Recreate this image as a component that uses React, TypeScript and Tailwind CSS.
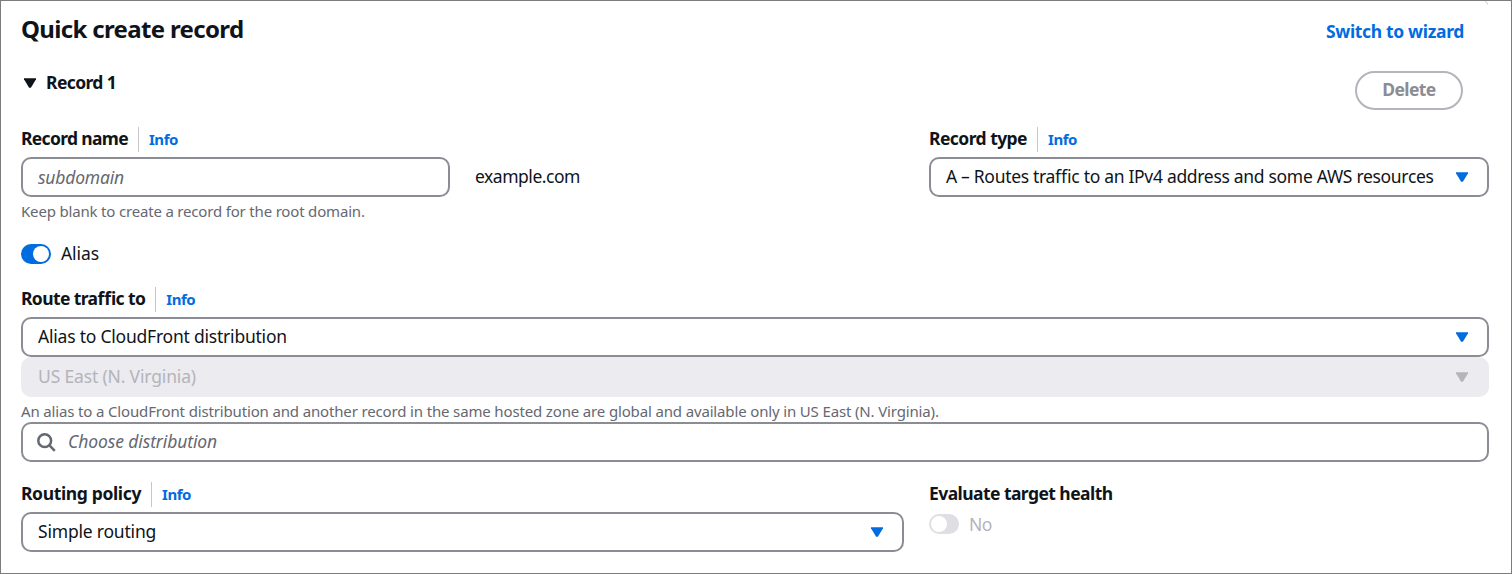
import type { ReactNode } from "react";

function Caret({ className = "" }: { className?: string }) {
  return (
    <svg className={`shrink-0 ${className}`} width="14" height="12" viewBox="0 0 14 12" fill="currentColor">
      <path d="M1 1.2h12v1L7.9 10.7H6.1L1 2.2z" />
    </svg>
  );
}

function Label({ text, spacing, info = true }: { text: string; spacing: string; info?: boolean }) {
  return (
    <div className="flex h-[25px] items-center">
      <span className={`pb-[2px] text-[17.5px] leading-[23px] font-bold whitespace-nowrap text-[#0f141a] ${spacing}`}>{text}</span>
      {info && (
        <span className="ml-[10px] flex h-[25px] items-center border-l border-[#c6c6cd] pl-[10px] text-[15px] font-bold tracking-[-0.45px] text-[#006ce0]">
          Info
        </span>
      )}
    </div>
  );
}

function Field({ children, className = "" }: { children: ReactNode; className?: string }) {
  return (
    <div
      className={`flex h-10 items-center rounded-[10px] border-2 border-[#8c8c94] bg-white px-[15px] text-[17.5px] leading-6 whitespace-nowrap text-[#0f141a] ${className}`}
    >
      {children}
    </div>
  );
}

export default function App() {
  return (
    <main className="relative h-[574px] w-[1512px] overflow-hidden border border-[#7c7c7c] bg-white pr-[22px] pl-5 font-['Noto_Sans',sans-serif] text-[#0f141a] [font-feature-settings:'liga'_1,'kern'_1]">
      <svg className="absolute top-0 right-[22px]" width="5" height="4" viewBox="0 0 5 4" fill="none" stroke="#c9c9ce">
        <path d="M1 0Q3 .8 3.5 3.5" />
      </svg>

      <header className="flex h-[58px] items-center justify-between pr-[25px]">
        <h1 className="-mt-[2px] text-[24px] leading-8 font-bold tracking-[-0.66px]">Quick create record</h1>
        <a className="mt-[2px] text-[17.5px] leading-6 font-bold tracking-[-0.33px] text-[#006ce0]">Switch to wizard</a>
      </header>

      <div className="flex h-[68px] items-start justify-between pt-[12px] pr-[26px]">
        <div className="flex h-6 items-center gap-[9px] pl-[2px]">
          <Caret />
          <span className="-mt-[2px] text-[17.5px] leading-6 font-bold tracking-[-0.6px]">Record 1</span>
        </div>
        <button className="flex h-[39px] w-[108px] items-center justify-center rounded-full border-2 border-[#b4b4bb] pb-[2px] text-[17.5px] font-bold tracking-[-0.58px] text-[#8c8c94]">
          Delete
        </button>
      </div>

      <section className="flex h-[117px] justify-between">
        <div>
          <Label text="Record name" spacing="tracking-[-0.67px]" />
          <div className="mt-[5px] flex items-center gap-[25px]">
            <Field className="w-[429px]">
              <span className="-mt-px tracking-[-0.19px] text-[#656871] italic">subdomain</span>
            </Field>
            <span className="-mt-[2px] text-[17.5px] leading-6 tracking-[-0.47px]">example.com</span>
          </div>
          <p className="mt-[4px] text-[15px] leading-5 tracking-[-0.18px] text-[#656871]">
            Keep blank to create a record for the root domain.
          </p>
        </div>
        <div className="w-[560px]">
          <Label text="Record type" spacing="tracking-[-0.55px]" />
          <Field className="mt-[5px] justify-between pr-[18px]">
            <span className="-mt-[2px] tracking-[-0.31px]">A – Routes traffic to an IPv4 address and some AWS resources</span>
            <Caret className="text-[#006ce0]" />
          </Field>
        </div>
      </section>

      <div className="flex h-[43px] items-start">
        <div className="flex h-5 items-center gap-[10px]">
          <span className="flex h-5 w-[30px] items-center justify-end rounded-full bg-[#006ce0] pr-[2px]">
            <span className="size-4 rounded-full bg-white" />
          </span>
          <span className="-mt-[2px] text-[17.5px] leading-5 tracking-[-0.08px]">Alias</span>
        </div>
      </div>

      <section className="flex h-[195px] flex-col">
        <Label text="Route traffic to" spacing="tracking-[-0.61px]" />
        <Field className="mt-[5px] justify-between pr-[18px]">
          <span className="-mt-[2px] tracking-[-0.22px]">Alias to CloudFront distribution</span>
          <Caret className="text-[#006ce0]" />
        </Field>
        <div className="flex h-10 items-center justify-between rounded-[10px] bg-[#ebebf0] pr-5 pl-[17px] text-[17.5px] leading-6 text-[#b4b4bb]">
          <span className="-mt-[2px] tracking-[-0.16px]">US East (N. Virginia)</span>
          <Caret />
        </div>
        <p className="mt-[4px] mb-px text-[15px] leading-5 tracking-[-0.15px] whitespace-nowrap text-[#656871]">
          An alias to a CloudFront distribution and another record in the same hosted zone are global and available only in
          US East (N. Virginia).
        </p>
        <Field className="pl-[14px]">
          <svg className="mr-[12px] shrink-0" width="19" height="19" viewBox="0 0 19 19" fill="none" stroke="#656871" strokeWidth="2.5">
            <circle cx="7.7" cy="7.7" r="6.4" />
            <path d="m12.2 12.2 5.6 5.6" />
          </svg>
          <span className="-mt-[2px] tracking-[-0.1px] text-[#656871] italic">Choose distribution</span>
        </Field>
      </section>

      <section className="flex">
        <div className="w-[883px]">
          <Label text="Routing policy" spacing="tracking-[-0.36px]" />
          <Field className="mt-[5px] justify-between pr-[18px]">
            <span className="-mt-[2px] tracking-[-0.2px]">Simple routing</span>
            <Caret className="text-[#006ce0]" />
          </Field>
        </div>
        <div className="ml-[25px]">
          <Label text="Evaluate target health" spacing="tracking-[-0.56px]" info={false} />
          <div className="mt-[7px] flex h-5 items-center gap-[10px]">
            <span className="flex h-5 w-[30px] items-center rounded-full bg-[#dedee3] pl-[2px]">
              <span className="size-4 rounded-full bg-white" />
            </span>
            <span className="-mt-px text-[17.5px] leading-5 tracking-[-0.45px] text-[#b4b4bb]">No</span>
          </div>
        </div>
      </section>
    </main>
  );
}
